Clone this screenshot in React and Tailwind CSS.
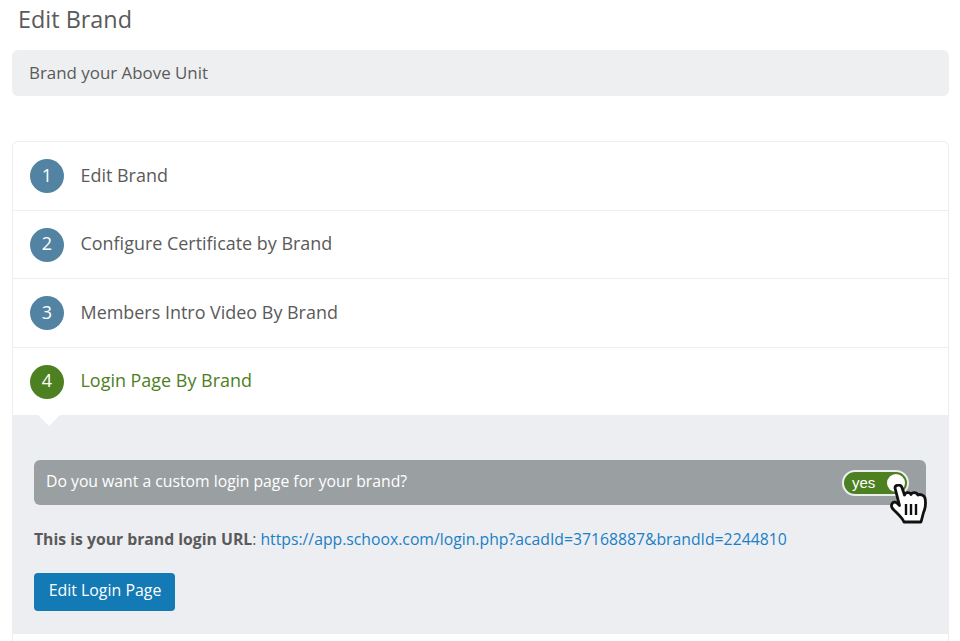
const rows = [
  { n: 1, label: "Edit Brand", h: "h-[69px]" },
  { n: 2, label: "Configure Certificate by Brand", h: "h-[68px]" },
  { n: 3, label: "Members Intro Video By Brand", h: "h-[69px]" },
];

function Hand() {
  return (
    <svg width="38" height="41" viewBox="0 0 38 41" className="absolute left-[890px] top-[484px]">
      <path
        d="M5 4C5 .5 11 .2 12 3.500L14.500 11C15.500 8 20 8 21 10.500C22 8 26.500 8 28 11C29.500 10 34 10.500 35 14C36 19 35.500 24 33.500 28.500L31 38L14 38C12 33 6 28.500 2.500 24.500C0 21 3 16 7 19L9.500 21.500Z"
        fill="#fff"
        stroke="#111"
        strokeWidth="2.800"
        strokeLinejoin="round"
      />
      <path d="M16 20v11M21 20v11M26 20v11" stroke="#111" strokeWidth="2.400" fill="none" />
    </svg>
  );
}

export default function App() {
  return (
    <div className="relative h-[641px] w-[960px] overflow-hidden bg-white font-['Open_Sans',sans-serif] text-[#5a5a5a]">
      <h1 className="ml-[18px] pt-[3px] h-[50px] text-[23.400px] leading-[32px] font-normal">Edit Brand</h1>
      <div className="mx-[12px] flex h-[46px] w-[937px] items-center rounded-[6px] bg-[#eeeff1] pl-[17px] text-[16.900px]">
        Brand your Above Unit
      </div>
      <div className="mx-[12px] mt-[45px] w-[937px] rounded-t-[6px] border border-[#eeeeee]">
        {rows.map((r) => (
          <div key={r.n} className={`flex ${r.h} items-center border-b border-[#eeeeee] pl-[17px]`}>
            <span className="flex h-[34px] w-[34px] items-center justify-center rounded-full bg-[#5283a3] pb-[2px] text-[18px] text-white">
              {r.n}
            </span>
            <span className="ml-[16.500px] pb-[2px] text-[17.950px]">{r.label}</span>
          </div>
        ))}
        <div className="flex h-[67px] items-center pl-[17px]">
          <span className="flex h-[34px] w-[34px] items-center justify-center rounded-full bg-[#4d8021] pb-[2px] text-[18px] text-white">
            4
          </span>
          <span className="ml-[16.500px] pb-[2px] text-[17.950px] text-[#4d8021]">Login Page By Brand</span>
        </div>
        <div className="relative h-[218px] bg-[#edeef2] px-[21px] pt-[45px]">
          <div className="absolute left-[25px] top-0 h-0 w-0 border-x-[11px] border-t-[11px] border-x-transparent border-t-white" />
          <div className="flex h-[45px] w-[892px] items-center justify-between rounded-[6px] bg-[#9a9fa2] pl-[12px] pr-[17px] text-[15.750px] text-white">
            <span className="pb-[2px]">Do you want a custom login page for your brand?</span>
            <span className="flex h-[26px] w-[67px] items-center justify-between rounded-full border-2 border-[#eef0f0] bg-[#4d8021] pl-[8px] pr-[2px] text-[15px] font-['Liberation_Sans',sans-serif]">
              <span className="pt-[2px]">yes</span>
              <span className="h-[18px] w-[18px] rounded-full bg-white" />
            </span>
          </div>
          <p className="mt-[21px] h-[26px] text-[15.750px] leading-[26px]">
            <b className="font-bold">This is your brand login URL</b>:{" "}
            <a className="text-[#1a7fc4]">https://app.schoox.com/login.php?acadId=37168887&amp;brandId=2244810</a>
          </p>
          <button className="mt-[21px] block h-[38px] w-[141px] rounded-[4px] bg-[#137ab6] pb-[2px] pl-[1px] text-[15.900px] text-white">
            Edit Login Page
          </button>
        </div>
        <div className="h-[20px] border-t border-[#eeeeee]" />
      </div>
      <Hand />
    </div>
  );
}
